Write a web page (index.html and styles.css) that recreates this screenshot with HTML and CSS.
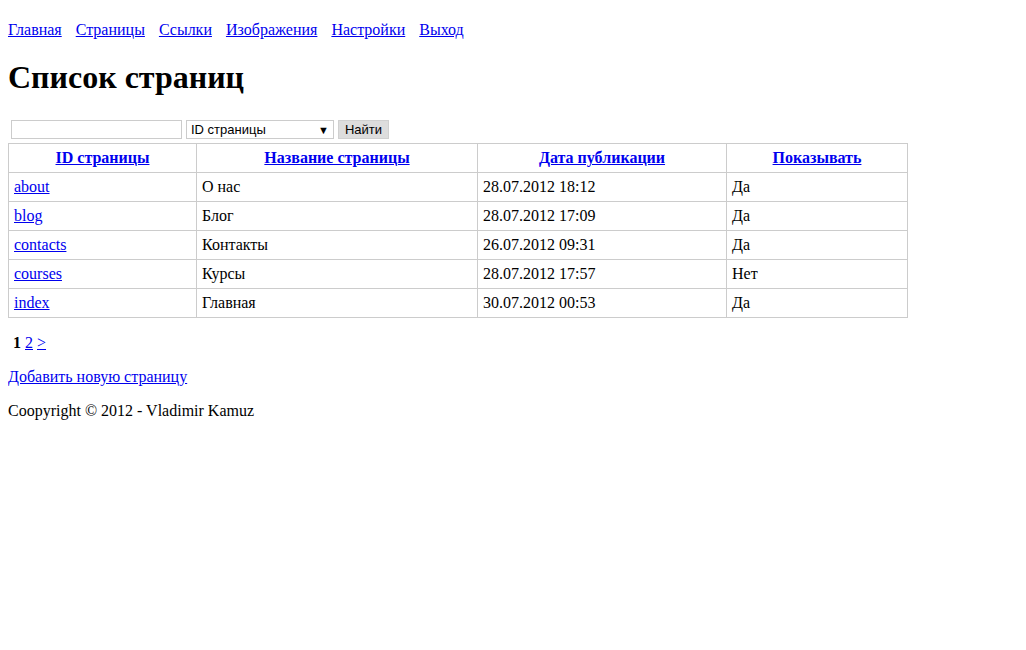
FILE: index.html
```html
<!DOCTYPE html>
<html lang="ru">
<head>
<meta charset="utf-8">
<title>Список страниц</title>
<link rel="stylesheet" href="styles.css">
</head>
<body>
<div class="nav">
  <a href="#">Главная</a>
  <a href="#">Страницы</a>
  <a href="#">Ссылки</a>
  <a href="#">Изображения</a>
  <a href="#">Настройки</a>
  <a href="#">Выход</a>
</div>
<h1 class="title">Список страниц</h1>
<form class="search">
  <input class="search-input" type="text">
  <div class="search-select"><span>ID страницы</span><span class="arrow">▼</span></div>
  <button class="search-btn" type="button">Найти</button>
</form>
<table class="pages">
  <colgroup>
    <col class="c1"><col class="c2"><col class="c3"><col class="c4">
  </colgroup>
  <thead>
    <tr>
      <th><a href="#">ID страницы</a></th>
      <th><a href="#">Название страницы</a></th>
      <th><a href="#">Дата публикации</a></th>
      <th><a href="#">Показывать</a></th>
    </tr>
  </thead>
  <tbody>
    <tr><td><a href="#">about</a></td><td>О нас</td><td>28.07.2012 18:12</td><td>Да</td></tr>
    <tr><td><a href="#">blog</a></td><td>Блог</td><td>28.07.2012 17:09</td><td>Да</td></tr>
    <tr><td><a href="#">contacts</a></td><td>Контакты</td><td>26.07.2012 09:31</td><td>Да</td></tr>
    <tr><td><a href="#">courses</a></td><td>Курсы</td><td>28.07.2012 17:57</td><td>Нет</td></tr>
    <tr><td><a href="#">index</a></td><td>Главная</td><td>30.07.2012 00:53</td><td>Да</td></tr>
  </tbody>
</table>
<p class="pager"><b>1</b> <a href="#">2</a> <a href="#">&gt;</a></p>
<p class="add"><a href="#">Добавить новую страницу</a></p>
<p class="copy">Coopyright © 2012 - Vladimir Kamuz</p>
</body>
</html>
```

FILE: styles.css
```css
html, body {
  background: #fff;
}
body {
  margin: 8px;
  font-family: "Liberation Serif", "Times New Roman", serif;
  font-size: 16px;
  color: #000;
}
a {
  color: #0000ee;
}
.nav {
  padding-top: 13px;
  display: flex;
  gap: 14px;
}
.title {
  font-size: 32px;
  font-weight: bold;
  margin: 20px 0 21px;
}
.search {
  display: flex;
  align-items: stretch;
  gap: 4px;
  padding: 3px 0 0 3px;
  height: 19px;
  margin-bottom: 4px;
}
.search-input {
  width: 171px;
  height: 19px;
  box-sizing: border-box;
  border: 1px solid #cccccc;
  margin: 0;
  padding: 0;
}
.search-select {
  width: 148px;
  height: 19px;
  box-sizing: border-box;
  border: 1px solid #cccccc;
  display: flex;
  align-items: center;
  justify-content: space-between;
  padding: 0 4px 0 4px;
  font-family: "Liberation Sans", Arial, sans-serif;
  font-size: 13px;
  color: #000;
}
.search-select .arrow {
  font-size: 11px;
}
.search-btn {
  width: 51px;
  height: 19px;
  box-sizing: border-box;
  border: 1px solid #d0d0d0;
  background: #dddddd;
  font-family: "Liberation Sans", Arial, sans-serif;
  font-size: 13px;
  color: #000;
  padding: 0;
}
.pages {
  border-collapse: collapse;
  width: 899px;
  table-layout: fixed;
}
.c1 { width: 188px; }
.c2 { width: 281px; }
.c3 { width: 249px; }
.c4 { width: 181px; }
.pages th, .pages td {
  border: 1px solid #cccccc;
  padding: 5px 5px;
  text-align: left;
}
.pages th {
  text-align: center;
  font-weight: bold;
}
.pager {
  margin: 16px 0;
  padding-left: 5px;
}
.pager a {
  color: #0000ee;
}
.add {
  margin: 16px 0;
}
.copy {
  margin: 16px 0;
}
```
